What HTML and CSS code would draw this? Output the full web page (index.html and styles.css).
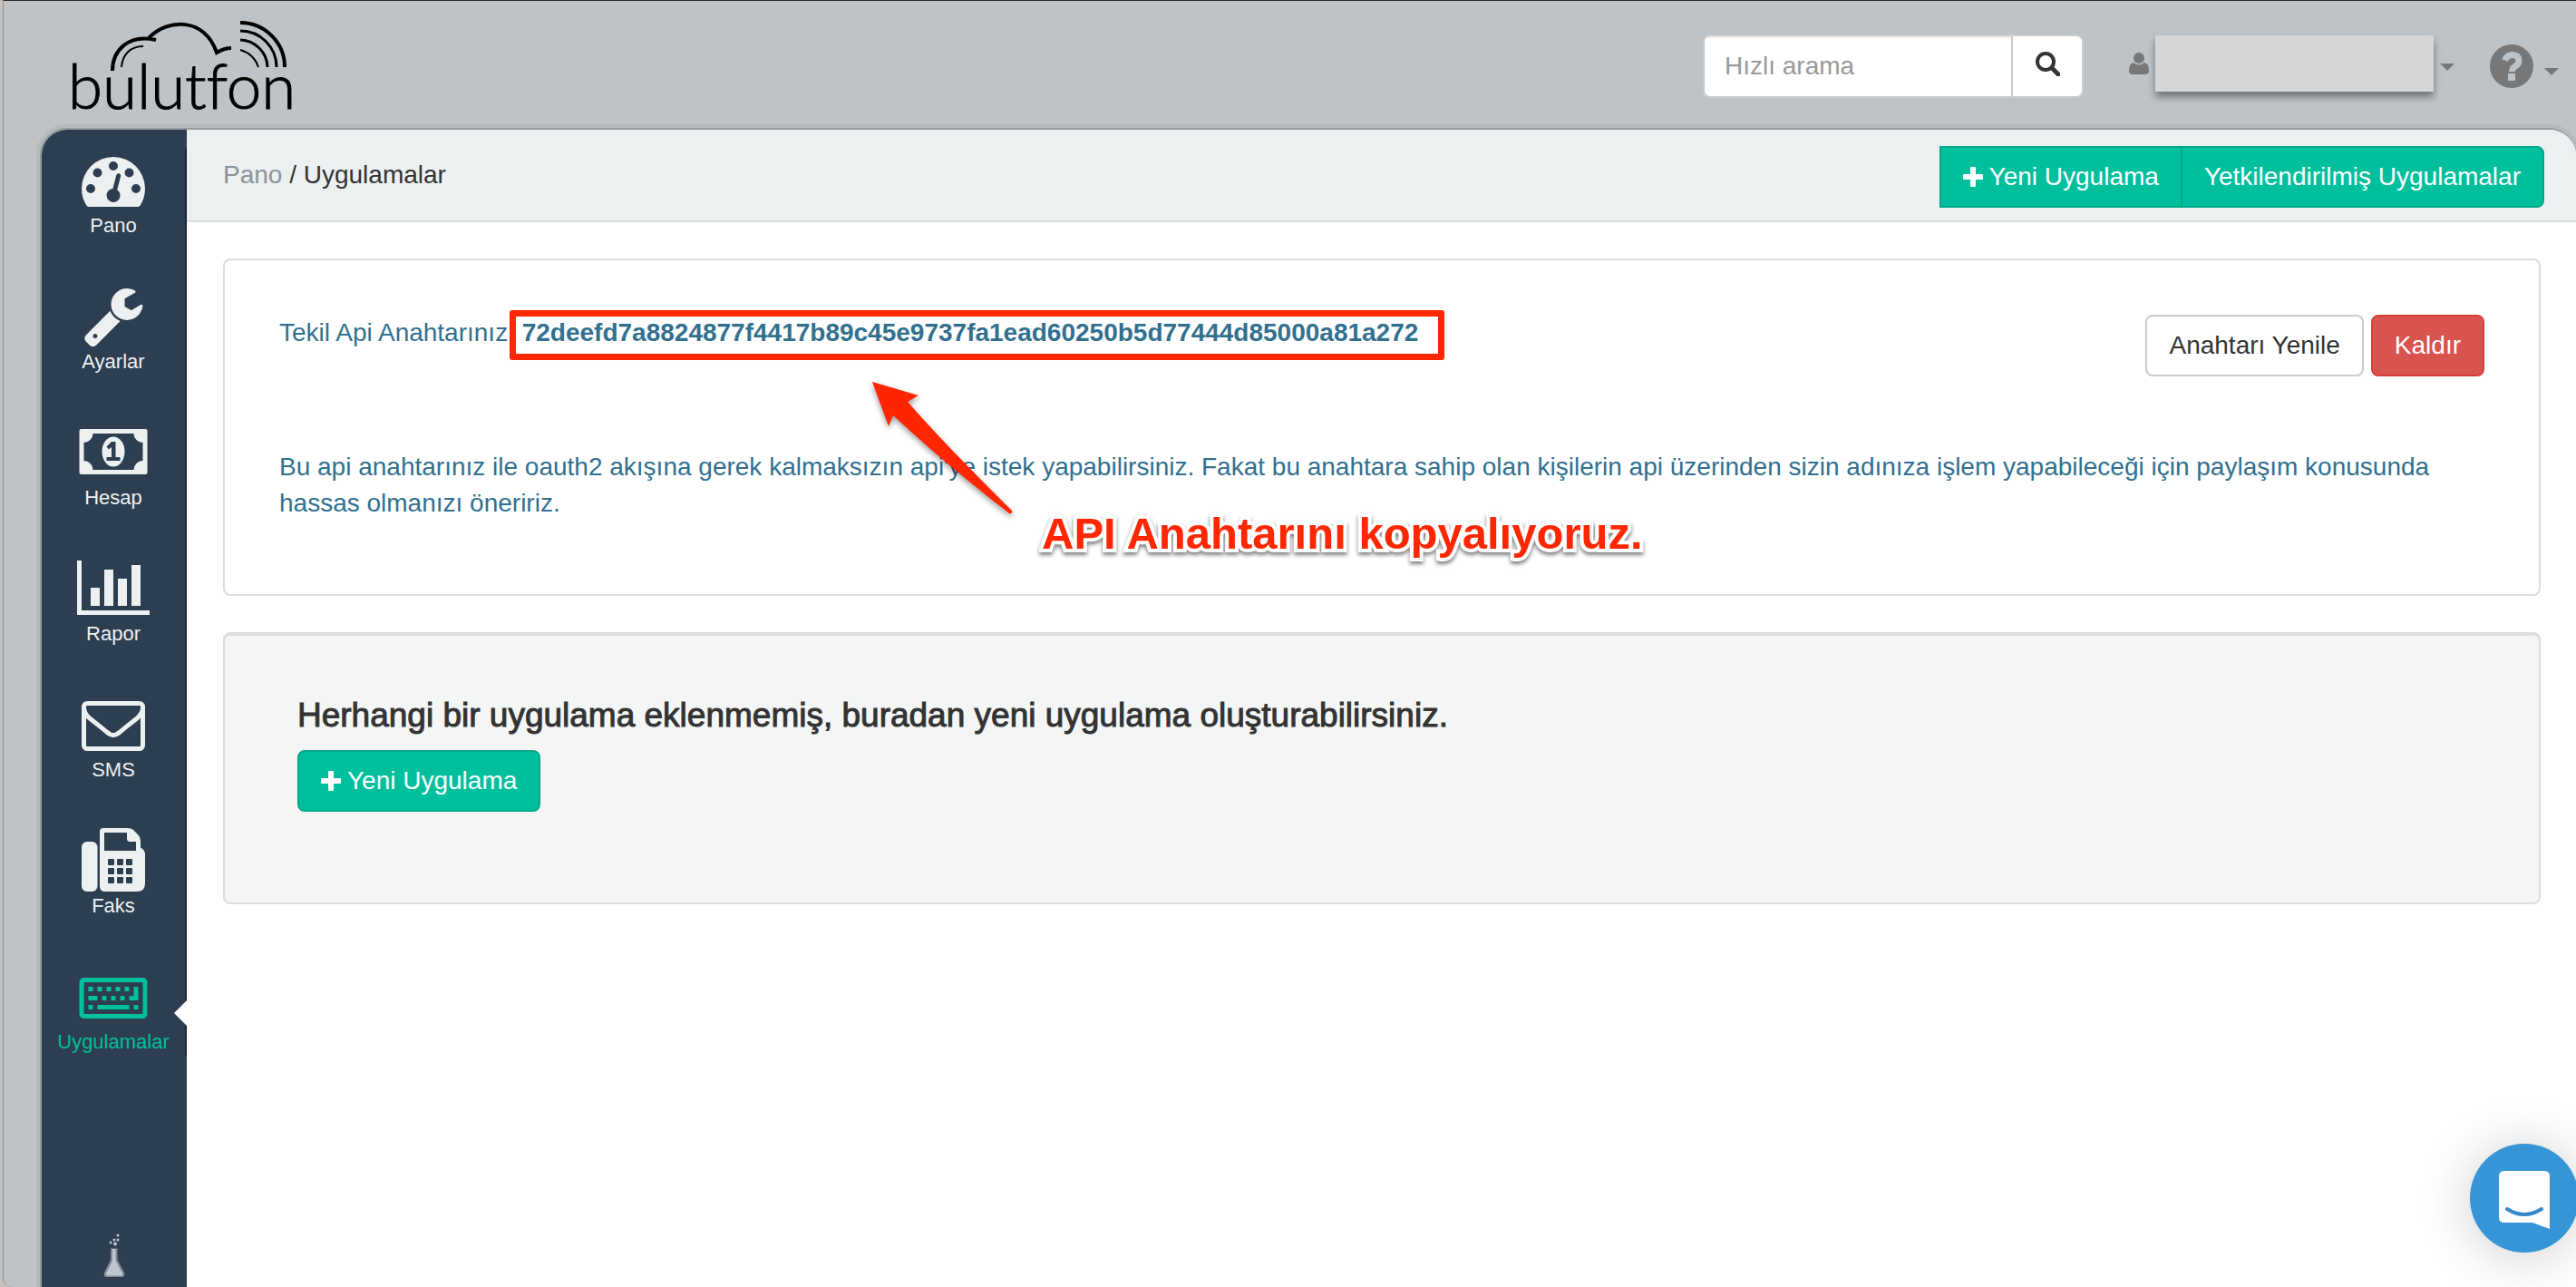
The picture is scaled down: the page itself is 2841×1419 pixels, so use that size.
FILE: index.html
```html
<!DOCTYPE html>
<html lang="tr">
<head>
<meta charset="utf-8">
<meta name="viewport" content="width=device-width, initial-scale=1">
<title>Bulutfon - Uygulamalar</title>
<link rel="stylesheet" href="styles.css">
</head>
<body>
<div class="frame">
  <header class="topbar">
    <a class="logo" href="#" aria-label="bulutfon">
      <svg width="276" height="119" viewBox="64 20 276 119">
        <g fill="none" stroke="#000">
          <path d="M124 78C124 56 141 37 172 44" stroke-width="4"/>
          <path d="M134 74C135 60 144 51 158 51" stroke-width="2"/>
          <path d="M164 42C185 20 226 19 239 58Q247 53 255 53" stroke-width="4"/>
          <path d="M265 25A49 49 0 0 1 314 74" stroke-width="4"/>
          <path d="M265 34A40 40 0 0 1 305 74" stroke-width="3"/>
          <path d="M265 44A31 31 0 0 1 295 74" stroke-width="3"/>
          <path d="M265 55A30 30 0 0 1 285 74" stroke-width="2"/>
        </g>
        <text class="logo-text" x="75" y="120">bulutfon</text>
      </svg>
    </a>
    <form class="search">
      <input class="search-input" type="search" placeholder="Hızlı arama" aria-label="Hızlı arama">
      <button class="search-button" type="button" aria-label="Ara">
        <svg width="28" height="28" viewBox="0 0 28 28" fill="none" stroke="#333"><circle cx="12" cy="12" r="9" stroke-width="4"/><path d="M19 19l7 7" stroke-width="5" stroke-linecap="round"/></svg>
      </button>
    </form>
    <button class="account" type="button" aria-label="Hesap menüsü">
      <svg width="22" height="24" viewBox="0 0 22 24" fill="#777"><ellipse cx="11" cy="6" rx="6" ry="6"/><path d="M5 11Q11 16 17 11Q22 12 22 20Q22 24 18 24H4Q0 24 0 20Q0 12 5 11z"/></svg>
      <span class="account-name"></span>
      <span class="caret"></span>
    </button>
    <button class="help" type="button" aria-label="Yardım">
      <svg width="48" height="48" viewBox="0 0 48 48"><circle cx="24" cy="24" r="24" fill="#777"/><path d="M16.500 17.500Q19 11.500 25 11.500Q32 12 32 18Q32 22 28 24Q24.500 26 24.500 30" fill="none" stroke="#bdc3c7" stroke-width="7"/><path d="M20 32h8v8h-8z" fill="#bdc3c7"/></svg>
      <span class="caret caret-low"></span>
    </button>
  </header>

  <div class="shell">
    <nav class="sidebar">
      <ul class="menu">
        <li><a class="menu-item" href="#">
          <svg width="70" height="70" viewBox="0 0 1792 1792"><path d="M384 1152q0-53-37.500-90.500t-90.500-37.500-90.500 37.500-37.500 90.500 37.500 90.500 90.500 37.500 90.500-37.500 37.500-90.500zm192-448q0-53-37.500-90.500t-90.500-37.500-90.500 37.500-37.500 90.500 37.500 90.500 90.500 37.500 90.500-37.500 37.500-90.500zm428 481l101-382q6-26-7.500-48.500t-38.500-29.500-48 6.500-30 39.500l-101 382q-60 5-107 43.500t-63 98.500q-20 77 20 146t117 89 146-20 89-117q16-60-6-117t-72-91zm660-33q0-53-37.500-90.500t-90.500-37.500-90.500 37.500-37.500 90.500 37.500 90.500 90.500 37.500 90.500-37.500 37.500-90.500zm-640-640q0-53-37.500-90.500t-90.500-37.500-90.500 37.500-37.500 90.500 37.500 90.500 90.500 37.500 90.500-37.500 37.500-90.500zm448 192q0-53-37.500-90.500t-90.500-37.500-90.500 37.500-37.500 90.500 37.500 90.500 90.500 37.500 90.500-37.500 37.500-90.500zm320 448q0 261-141 483-19 29-54 29h-1402q-35 0-54-29-141-221-141-483 0-182 71-348t191-286 286-191 348-71 348 71 286 191 191 286 71 348z"/></svg>
          <span>Pano</span></a></li>
        <li><a class="menu-item" href="#">
          <svg width="70" height="70" viewBox="0 0 1792 1792"><path d="M448 1472q0-26-19-45t-45-19-45 19-19 45 19 45 45 19 45-19 19-45zm644-420l-682 682q-37 37-90 37-52 0-91-37l-106-108q-38-36-38-90 0-53 38-91l681-681q39 98 114.500 173.500t173.500 114.500zm634-435q0 39-23 106-47 134-164.500 217.500t-258.500 83.500q-185 0-316.500-131.500t-131.500-316.500 131.500-316.500 316.500-131.500q58 0 121.500 16.500t107.500 46.500q16 11 16 28t-16 28l-293 169v224l193 107q5-3 79-48.500t135.500-81 70.500-35.500q15 0 23.500 10t8.500 25z"/></svg>
          <span>Ayarlar</span></a></li>
        <li><a class="menu-item" href="#">
          <svg width="80" height="70" viewBox="0 0 80 70"><path fill-rule="evenodd" d="M4.500 10H75.500Q77.500 10 77.500 12V58Q77.500 60 75.500 60H4.500Q2.500 60 2.500 58V12Q2.500 10 4.500 10zM17.500 15A10 10 0 0 1 7.500 25V45A10 10 0 0 1 17.500 55H62.500A10 10 0 0 1 72.500 45V25A10 10 0 0 1 62.500 15z"/><ellipse cx="40" cy="35" rx="12.500" ry="16.500"/><path fill="#2c3e50" d="M38 24H42.500V41H47.500V45H32.500V41H38V30L35 32.500L32.500 29.500z"/></svg>
          <span>Hesap</span></a></li>
        <li><a class="menu-item" href="#">
          <svg width="80" height="70" viewBox="0 0 80 70"><path d="M0 5H5V60H80V65H0zM15 35H25V55H15zM30 15H40V55H30zM45 25H55V55H45zM60 10H70V55H60z"/></svg>
          <span>Rapor</span></a></li>
        <li><a class="menu-item" href="#">
          <svg width="70" height="70" viewBox="0 0 1792 1792"><path d="M1664 1504v-768q-32 36-69 66-268 206-426 338-51 43-83 67t-86.500 48.500-102.500 24.500h-2q-48 0-102.500-24.500t-86.500-48.500-83-67q-158-132-426-338-37-30-69-66v768q0 13 9.500 22.500t22.500 9.500h1472q13 0 22.500-9.500t9.500-22.500zm0-1051v-24.500l-.5-13-3-12.500-5.500-9-9-7.500-14-2.500h-1472q-13 0-22.500 9.500t-9.500 22.500q0 168 147 284 193 152 401 317 6 5 35 29.500t46 37.500 44.500 31.500 50.500 27.500 43 9h2q20 0 43-9t50.500-27.500 44.500-31.500 46-37.500 35-29.500q208-165 401-317 54-43 100.500-115.500t46.500-131.500zm128-37v1088q0 66-47 113t-113 47h-1472q-66 0-113-47t-47-113v-1088q0-66 47-113t113-47h1472q66 0 113 47t47 113z"/></svg>
          <span>SMS</span></a></li>
        <li><a class="menu-item" href="#">
          <svg width="80" height="70" viewBox="0 0 80 70"><rect x="5" y="15" width="17.500" height="55" rx="6"/><path fill-rule="evenodd" d="M29 0H55Q60 0 62 2L67 7Q70 10 70 14V21.500Q75 24 75 29V61Q75 70 66 70H31Q25 70 25 64V4Q25 0 29 0zM30 5V25H65V15H58.500Q55 15 55 11.500V5z"/><g fill="#2c3e50"><rect x="34" y="34" width="7" height="7" rx="1"/><rect x="44" y="34" width="7" height="7" rx="1"/><rect x="54" y="34" width="7" height="7" rx="1"/><rect x="34" y="44" width="7" height="7" rx="1"/><rect x="44" y="44" width="7" height="7" rx="1"/><rect x="54" y="44" width="7" height="7" rx="1"/><rect x="34" y="54" width="7" height="7" rx="1"/><rect x="44" y="54" width="7" height="7" rx="1"/><rect x="54" y="54" width="7" height="7" rx="1"/></g></svg>
          <span>Faks</span></a></li>
        <li><a class="menu-item active" href="#">
          <svg width="80" height="70" viewBox="0 0 80 70"><rect x="5" y="17.500" width="70" height="40" rx="2.500" fill="none" stroke="#00bf9d" stroke-width="5"/><path d="M12.500 25h5v5h-5zM22.500 25h5v5h-5zM32.500 25h5v5h-5zM42.500 25h5v5h-5zM52.500 25h5v5h-5zM62.500 25h5v15h-10v-5h5zM12.500 35h10v5h-10zM27.500 35h5v5h-5zM37.500 35h5v5h-5zM47.500 35h5v5h-5zM12.500 45h5v5h-5zM22.500 45h35v5h-35zM62.500 45h5v5h-5z"/></svg>
          <span>Uygulamalar</span></a></li>
      </ul>
      <svg class="flask" width="24" height="49" viewBox="0 0 24 49" fill="#c0c6cd"><circle cx="16" cy="2" r="1.500"/><circle cx="12" cy="7" r="1.500"/><circle cx="16" cy="7" r="1.500"/><circle cx="8" cy="10" r="1.500"/><circle cx="13" cy="11.500" r="2"/><path d="M8 15.500Q8.500 17 9 16.500H14.500Q15 17 15.500 15.500V29L23 43Q24 48 21 48H3Q0 48 1 43L8 29z" fill="#7f8b99"/><path d="M10 17H13.500V30L21 44Q22 46.500 20 46.500H4Q2 46.500 3 44L10 30z"/></svg>
    </nav>

    <main class="content">
      <div class="page-head">
        <div class="breadcrumb"><a href="#">Pano</a> / Uygulamalar</div>
        <div class="button-group">
          <button class="button primary" type="button"><svg width="22" height="22" viewBox="0 0 22 22"><path d="M8 1q0-1 1-1h4q1 0 1 1v7h7q1 0 1 1v4q0 1-1 1h-7v7q0 1-1 1H9q-1 0-1-1v-7H1q-1 0-1-1V9q0-1 1-1h7z" fill="#fff"/></svg>Yeni Uygulama</button>
          <button class="button primary" type="button">Yetkilendirilmiş Uygulamalar</button>
        </div>
      </div>
      <section class="card key-card">
        <div class="key-row">
          <p>Tekil Api Anahtarınız: <strong>72deefd7a8824877f4417b89c45e9737fa1ead60250b5d77444d85000a81a272</strong></p>
          <div class="actions">
            <button class="button" type="button">Anahtarı Yenile</button>
            <button class="button danger" type="button">Kaldır</button>
          </div>
        </div>
        <p class="key-note">Bu api anahtarınız ile oauth2 akışına gerek kalmaksızın api'ye istek yapabilirsiniz. Fakat bu anahtara sahip olan kişilerin api üzerinden sizin adınıza işlem yapabileceği için paylaşım konusunda hassas olmanızı öneririz.</p>
        <div class="mark-box"></div>
        <svg class="mark-arrow" width="160" height="154" viewBox="0 0 160 154"><path d="M2 2L53 17L41 24Q84 73 156 144Q157 148 153 147Q82 92 25 39L20 51z" fill="#ff2600"/></svg>
        <div class="mark-text">API Anahtarını kopyalıyoruz.</div>
      </section>
      <section class="card empty-card">
        <h1>Herhangi bir uygulama eklenmemiş, buradan yeni uygulama oluşturabilirsiniz.</h1>
        <button class="button primary" type="button"><svg width="22" height="22" viewBox="0 0 22 22"><path d="M8 1q0-1 1-1h4q1 0 1 1v7h7q1 0 1 1v4q0 1-1 1h-7v7q0 1-1 1H9q-1 0-1-1v-7H1q-1 0-1-1V9q0-1 1-1h7z" fill="#fff"/></svg>Yeni Uygulama</button>
      </section>
    </main>
  </div>
</div>
<button class="chat" type="button" aria-label="Sohbet">
  <svg width="56" height="64" viewBox="0 0 56 64"><path d="M6 0H50Q56 0 56 6V64L37 57H6Q0 57 0 51V6Q0 0 6 0z" fill="#fff"/><path d="M9 42Q28 54 47 42" fill="none" stroke="#3388c8" stroke-width="4" stroke-linecap="round"/></svg>
</button>
</body>
</html>
```
FILE: styles.css
```css
* {
  box-sizing: border-box;
}

body {
  margin: 0;
  padding-left: 3px;
  background: #c4c1bf;
  color: #333;
  font-family: "Liberation Sans", Arial, sans-serif;
  font-size: 28px;
  line-height: 40px;
  overflow-x: hidden;
}

a {
  color: inherit;
  text-decoration: none;
}

p,
h1,
ul {
  margin: 0;
  padding: 0;
}

ul {
  list-style: none;
}

button,
input {
  font: inherit;
  color: inherit;
}

svg {
  display: block;
  flex: none;
}

.frame {
  display: flex;
  flex-direction: column;
  min-height: 100vh;
  border-top: 1px solid #2a282d;
  border-left: 1px solid #8f9193;
  border-bottom-left-radius: 10px;
  background: #bdc3c7;
  overflow: hidden;
}

/* Top bar */
.topbar {
  display: flex;
  align-items: flex-start;
  height: 140px;
  padding: 19px 19px 0 60px;
}

.logo {
  margin-right: auto;
}

.logo-text {
  font-family: Lato, sans-serif;
  font-size: 69px;
  font-weight: 300;
  font-variant-ligatures: none;
  stroke: #000;
  stroke-width: 1px;
}

.search {
  display: flex;
  width: 420px;
  height: 70px;
  margin: 18px 50px 0 0;
  border: 2px solid #ccc;
  border-radius: 8px;
  background: #fff;
  overflow: hidden;
}

.search-input {
  flex: 1;
  min-width: 0;
  padding: 0 22px;
  border: 0;
  border-right: 2px solid #ccc;
  background: transparent;
  box-shadow: inset 0 2px 2px rgba(0, 0, 0, 0.08);
  outline: 0;
}

.search-input::placeholder {
  color: #999;
}

.search-button {
  display: flex;
  align-items: center;
  justify-content: center;
  width: 76px;
  padding: 0 0 6px;
  border: 0;
  background: transparent;
}

.account,
.help {
  display: flex;
  align-items: center;
  padding: 0;
  border: 0;
  background: transparent;
}

.account {
  gap: 7px;
  margin: 19px 39px 0 0;
}

.account-name {
  width: 307px;
  height: 62px;
  background: #d6d6d6;
  box-shadow: 0 6px 8px rgba(0, 0, 0, 0.4);
}

.caret {
  margin-top: 8px;
  border: 8px solid transparent;
  border-top-color: #777;
  border-bottom: 0;
}

.help {
  gap: 12px;
  margin-top: 29px;
}

.caret-low {
  margin-top: 12px;
}

/* Shell */
.shell {
  display: flex;
  flex: 1;
  margin-left: 40px;
  border: 2px solid #949c9f;
  border-width: 2px 0 0 2px;
  border-radius: 30px 30px 0 0;
  box-shadow: 0 0 0 4px #b3b9bd;
  background: #fff;
  overflow: hidden;
}

/* Sidebar */
.sidebar {
  display: flex;
  flex-direction: column;
  align-items: center;
  justify-content: space-between;
  width: 160px;
  padding: 20px 0 10px;
  background: #2c3e50;
}

.menu {
  display: flex;
  flex-direction: column;
  gap: 48px;
  width: 100%;
  border-right: 2px solid #1c2733;
}

.menu-item {
  position: relative;
  display: flex;
  flex-direction: column;
  align-items: center;
  color: #ecf0f1;
  fill: #ecf0f1;
  font-size: 22px;
  line-height: 32px;
}

.menu-item.active {
  color: #00bf9d;
  fill: #00bf9d;
}

.menu-item.active::after {
  content: "";
  position: absolute;
  top: 40px;
  right: -2px;
  border: 14px solid transparent;
  border-left: 0;
  border-right-color: #fff;
}

/* Content */
.content {
  display: flex;
  flex: 1;
  flex-direction: column;
  gap: 40px;
  min-width: 0;
}

.page-head {
  display: flex;
  align-items: center;
  justify-content: space-between;
  height: 102px;
  padding: 4px 35px 0 40px;
  border-bottom: 2px solid #ddd;
  background: #ecf0f1;
}

.breadcrumb {
  padding-bottom: 4px;
}

.breadcrumb a {
  color: #8a9499;
}

.button-group,
.actions {
  display: flex;
}

.actions {
  gap: 8px;
}

.button {
  display: flex;
  align-items: center;
  gap: 7px;
  padding: 12px 24px;
  border: 2px solid #ccc;
  border-radius: 8px;
  background: #fff;
  white-space: nowrap;
}

.button.primary {
  border-color: #00a789;
  background: #00bf9d;
  color: #fff;
}

.button.danger {
  border-color: #d43f3a;
  background: #d9534f;
  color: #fff;
}

.button-group .button {
  border-radius: 0 8px 8px 0;
}

.button-group .button:first-child {
  border-right: 0;
  border-radius: 0;
}

.card {
  position: relative;
  margin: 0 39px 0 40px;
  border: 2px solid #ddd;
  border-radius: 8px;
}

.key-card {
  padding: 60px 60px 80px;
  color: #31708f;
}

.key-row {
  display: flex;
  align-items: flex-start;
  justify-content: space-between;
  margin-bottom: 80px;
}

.key-row .button {
  color: #333;
}

.key-row .danger {
  color: #fff;
}

/* Annotations drawn over the key card */
.mark-box {
  position: absolute;
  top: 55px;
  left: 314px;
  width: 1031px;
  height: 55px;
  border: 7px solid #ff2600;
  border-radius: 3px;
}

.mark-arrow {
  position: absolute;
  top: 132px;
  left: 712px;
  filter: drop-shadow(0 3px 3px rgba(0, 0, 0, 0.4));
}

.mark-text {
  position: absolute;
  top: 277px;
  left: 901px;
  color: #ff2600;
  font-size: 49px;
  font-weight: bold;
  line-height: 48px;
  white-space: nowrap;
  -webkit-text-stroke: 8px #fff;
  paint-order: stroke fill;
  filter: drop-shadow(0 3px 2px rgba(0, 0, 0, 0.5));
}

.empty-card {
  display: flex;
  flex-direction: column;
  align-items: flex-start;
  gap: 18px;
  padding: 68px 80px 100px;
  border-top-width: 4px;
  background: #f4f6f6;
}

.empty-card h1 {
  font-size: 37px;
  font-weight: normal;
  line-height: 40px;
  -webkit-text-stroke: 1px #333;
}

/* Chat launcher */
.chat {
  position: fixed;
  right: -3px;
  bottom: 38px;
  display: flex;
  align-items: center;
  justify-content: center;
  width: 120px;
  height: 120px;
  padding: 4px 0 0;
  border: 0;
  border-radius: 50%;
  background: #3695d6;
  box-shadow: 0 4px 60px rgba(0, 0, 0, 0.2);
}
```
